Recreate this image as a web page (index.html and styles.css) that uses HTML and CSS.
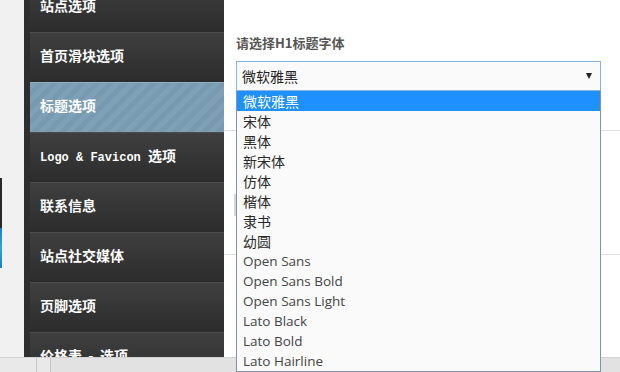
FILE: index.html
```html
<!DOCTYPE html>
<html lang="zh-CN">
  <head>
    <meta charset="UTF-8" />
    <meta name="viewport" content="width=device-width, initial-scale=1.0" />
    <title>主题选项</title>
    <link rel="stylesheet" href="styles.css">
  </head>
  <body>
    <div class="page">
      <div class="main">
        <div class="gutter">
          <div class="edge">
            <span class="edge-dark"></span>
            <span class="edge-blue"></span>
          </div>
        </div>

        <ul class="menu">
          <li class="first">站点选项</li>
          <li>首页滑块选项</li>
          <li class="active">标题选项</li>
          <li><span class="mono">Logo &amp; Favicon </span>选项</li>
          <li>联系信息</li>
          <li>站点社交媒体</li>
          <li>页脚选项</li>
          <li>价格表 &nbsp;- &nbsp;选项</li>
        </ul>

        <div class="content">
          <div class="field">
            <label class="field-label">请选择H1标题字体</label>
            <div class="select">
              <span>微软雅黑</span>
              <span class="arrow"></span>
            </div>
            <ul class="options">
              <li class="selected">微软雅黑</li>
              <li>宋体</li>
              <li>黑体</li>
              <li>新宋体</li>
              <li>仿体</li>
              <li>楷体</li>
              <li>隶书</li>
              <li>幼圆</li>
              <li class="latin">Open Sans</li>
              <li class="latin">Open Sans Bold</li>
              <li class="latin">Open Sans Light</li>
              <li class="latin">Lato Black</li>
              <li class="latin">Lato Bold</li>
              <li class="latin">Lato Hairline</li>
            </ul>
          </div>
          <div class="rule first-rule"></div>
          <div class="input-stub"></div>
          <div class="rule second-rule"></div>
        </div>
      </div>

      <div class="statusbar">
        <span class="tab"></span>
        <span class="tab small"></span>
      </div>
    </div>
  </body>
</html>
```

FILE: styles.css
```css
html,
body {
  margin: 0;
  padding: 0;
}
body {
  font-family: "Noto Sans CJK SC", "Liberation Sans", sans-serif;
  background: #fff;
}
.page {
  width: 620px;
  height: 372px;
  overflow: hidden;
  display: flex;
  flex-direction: column;
}
.main {
  display: flex;
  height: 357px;
}

/* left strip */
.gutter {
  width: 24px;
  background-color: #f1f1f1;
  display: flex;
}
.edge {
  width: 2px;
  padding-top: 178px;
  display: flex;
  flex-direction: column;
}
.edge-dark {
  display: block;
  height: 50px;
  background-color: #2a2a2a;
}
.edge-blue {
  display: block;
  height: 40px;
  background: linear-gradient(#1c7fc4, #37a3e0 50%, #1c7fc4);
}

/* menu */
.menu {
  list-style: none;
  margin: 0;
  padding: 0 0 0 6px;
  width: 194px;
  overflow: hidden;
  background-color: #2e2e2e;
}
.menu li {
  height: 49px;
  line-height: 44px;
  padding-left: 10px;
  color: #fff;
  font-size: 14px;
  font-weight: bold;
  border-top: 1px solid #4c4c4c;
  background: linear-gradient(#3f3f3f, #2c2c2c);
  white-space: nowrap;
}
.menu li.first {
  margin-top: -18px;
}
.menu li.active {
  border-top-color: #8fb1c5;
  background-color: #7a9db4;
  background-image: repeating-linear-gradient(
    135deg,
    rgba(255, 255, 255, 0.035) 0,
    rgba(255, 255, 255, 0.035) 5px,
    rgba(0, 0, 0, 0.02) 5px,
    rgba(0, 0, 0, 0.02) 10px
  );
}
.menu .mono {
  font-family: "Liberation Mono", monospace;
  font-size: 12px;
}

/* content */
.content {
  flex: 1;
  padding: 34px 19px 0 12px;
}
.field {
  position: relative;
}
.field-label {
  display: block;
  height: 18px;
  line-height: 18px;
  margin-bottom: 9px;
  font-size: 13px;
  font-weight: bold;
  color: #555;
}
.select {
  height: 28px;
  border: 1px solid #86b5de;
  background-color: #fafafa;
  display: flex;
  align-items: center;
  justify-content: space-between;
  padding: 0 8px 0 5px;
  font-size: 14px;
  color: #222;
}
.arrow {
  width: 0;
  height: 0;
  border-left: 3.5px solid transparent;
  border-right: 3.5px solid transparent;
  border-top: 6px solid #222;
}

/* open list, floats over the page */
.options {
  position: absolute;
  top: 57px;
  left: 0;
  right: 0;
  z-index: 2;
  list-style: none;
  margin: 0;
  padding: 0;
  background-color: #fafafa;
  border: 1px solid #7f92b5;
  border-top: none;
}
.options li {
  height: 20px;
  line-height: 20px;
  padding-left: 6px;
  font-size: 14px;
  color: #2a2a2a;
}
.options li.latin {
  font-family: "Open Sans", sans-serif;
  font-size: 13.5px;
  color: #444;
}
.options li.selected {
  background-color: #1e90ff;
  color: #fff;
}

.rule {
  height: 1px;
  background-color: #dedede;
  margin-left: -12px;
  margin-right: -19px;
}
.first-rule {
  margin-top: 39px;
}
.input-stub {
  width: 2px;
  height: 22px;
  margin: 63px 0 0 -2px;
  background-color: #d6d6d6;
}
.second-rule {
  margin-top: 38px;
}

/* bottom bar */
.statusbar {
  height: 15px;
  background-color: #e2e2e2;
  border-top: 1px solid #d2d2d2;
  display: flex;
}
.tab {
  width: 36px;
  border-right: 1px solid #c6c6c6;
  background-color: #e9e9e9;
}
.tab.small {
  width: 13px;
}
```
